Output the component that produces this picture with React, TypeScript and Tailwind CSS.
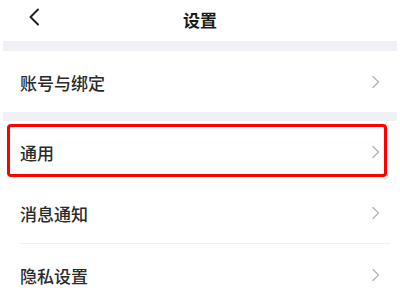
const font = "font-['Noto_Sans_CJK_SC',sans-serif]";

const Chevron = () => (
  <svg width="10" height="14" viewBox="0 0 10 14" fill="none">
    <path d="M2 1.5 L7.5 7 L2 12.5" stroke="#b4b4b6" strokeWidth="1.3" strokeLinecap="round" strokeLinejoin="round" />
  </svg>
);

const Row = ({ label, highlight = false }: { label: string; highlight?: boolean }) => (
  <div className="relative flex h-[61px] items-center justify-between pl-5 pr-[19px]">
    <span className="mt-[1px] text-[17px] font-medium leading-none text-[#2a2a2a]">{label}</span>
    <Chevron />
    {highlight && (
      <div className="absolute left-[7px] right-[13px] top-[3px] bottom-[5px] rounded-[4px] border-[3px] border-[#ff0000]" />
    )}
  </div>
);

export default function App() {
  return (
    <div className={`h-[300px] w-[400px] overflow-hidden bg-white ${font}`}>
      <div className="relative flex h-[41px] items-center justify-center">
        <svg className="absolute left-[28px] top-[8px]" width="12" height="18" viewBox="0 0 12 18" fill="none">
          <path d="M10 1.5 L2.5 9 L10 16.5" stroke="#222" strokeWidth="2" strokeLinecap="round" strokeLinejoin="round" />
        </svg>
        <span className="-mt-[2px] text-[17px] font-bold leading-none text-[#1a1a1a]">设置</span>
      </div>
      <div className="mx-[3px] h-[10px] bg-[#f0f1f4]" />
      <Row label="账号与绑定" />
      <div className="mx-[3px] h-[9px] bg-[#f0f1f4]" />
      <Row label="通用" highlight />
      <Row label="消息通知" />
      <div className="ml-5 mr-[10px] h-px bg-[#f0f0f2]" />
      <Row label="隐私设置" />
    </div>
  );
}
